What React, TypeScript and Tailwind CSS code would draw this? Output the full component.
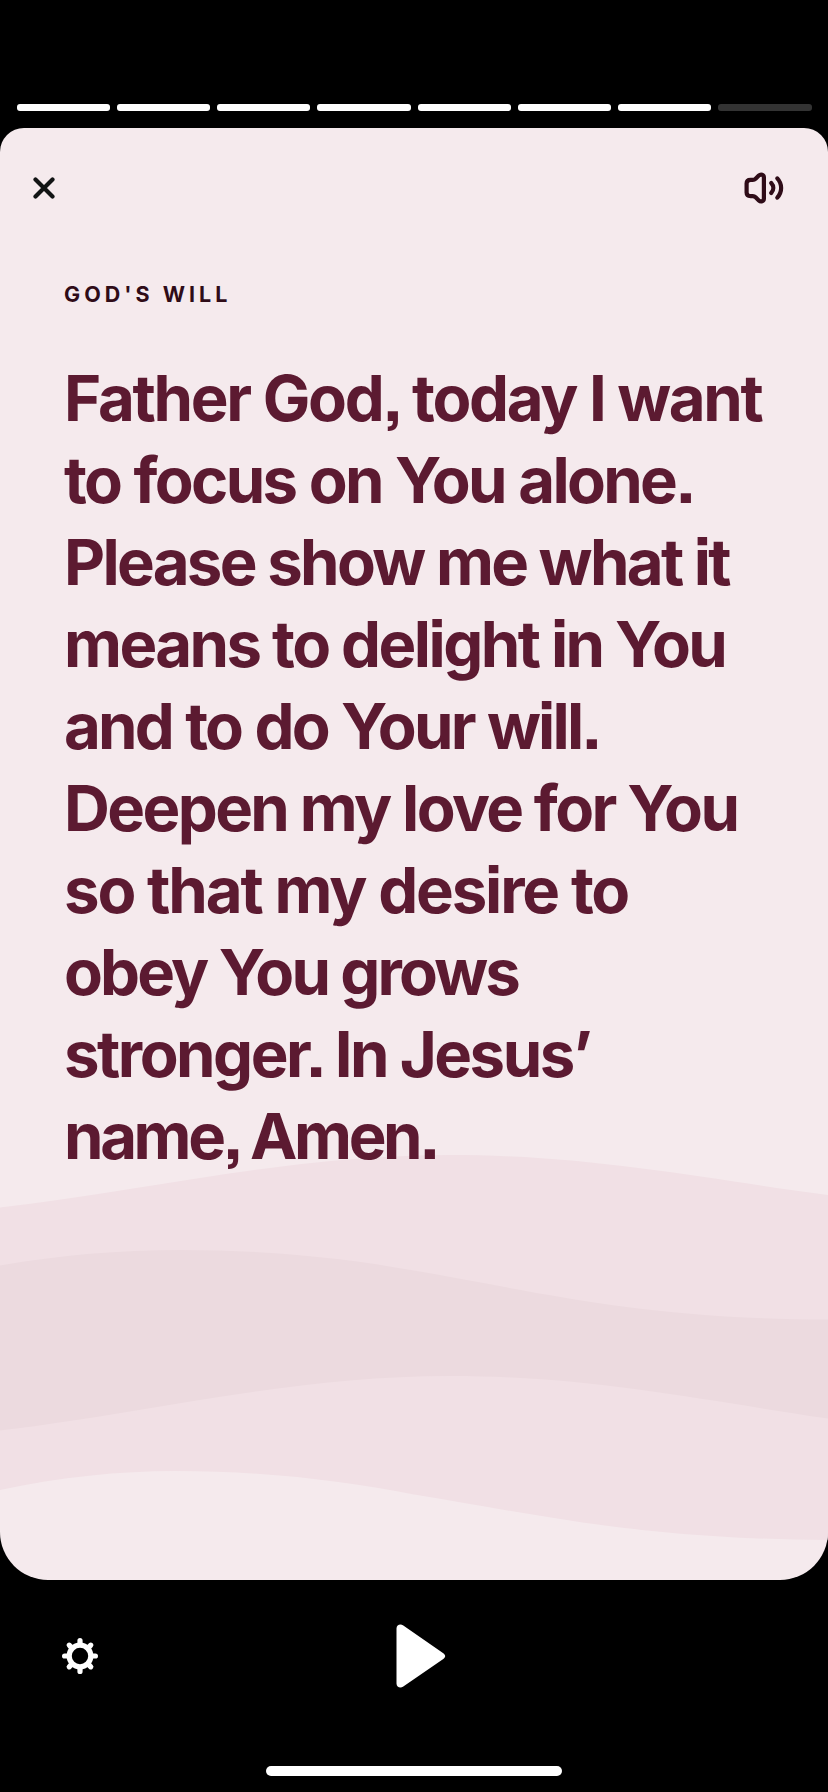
const TOTAL_STEPS = 8;
const CURRENT_STEP = 7;

const prayerLines = [
    { text: "Father God, today I want", tracking: "tracking-[-2.3px]" },
    { text: "to focus on You alone.", tracking: "tracking-[-2.7px] [word-spacing:1px]" },
    { text: "Please show me what it", tracking: "tracking-[-2.7px]" },
    { text: "means to delight in You", tracking: "tracking-[-2.55px]" },
    { text: "and to do Your will.", tracking: "tracking-[-2.8px] [word-spacing:1px]" },
    { text: "Deepen my love for You", tracking: "tracking-[-2.6px]" },
    { text: "so that my desire to", tracking: "tracking-[-2.15px]" },
    { text: "obey You grows", tracking: "tracking-[-2.85px]" },
    { text: "stronger. In Jesus’", tracking: "tracking-[-2.5px]" },
    { text: "name, Amen.", tracking: "tracking-[-3.4px]" },
];

function CloseIcon() {
    return (
        <svg width="22" height="22" viewBox="0 0 22 22" fill="none" stroke="#121414" strokeWidth="4.2" strokeLinecap="round">
            <path d="M2.5 2.5 19.5 19.5M19.5 2.5 2.5 19.5" />
        </svg>
    );
}

function SpeakerIcon() {
    return (
        <svg width="40" height="32" viewBox="0 0 40 32" fill="none" stroke="#2f0c18" strokeWidth="4.2" strokeLinecap="round" strokeLinejoin="round">
            <path d="M2.6 11.5C2.6 9 4.4 7.9 6.6 7.9H8.8C9.9 7.9 10.8 7.5 11.6 6.7L14.8 3.6C16.8 1.7 19.9 2.6 19.9 5.5V26.5C19.9 29.4 16.8 30.3 14.8 28.4L11.6 25.3C10.8 24.5 9.9 24.1 8.8 24.1H6.6C4.4 24.1 2.6 23 2.6 20.5Z" />
            <path d="M27.2 11C30 14 30 18 27.2 21" />
            <path d="M33.3 6.4C38.4 12 38.4 20 33.3 25.6" />
        </svg>
    );
}

function GearIcon() {
    return (
        <svg width="36" height="36" viewBox="0 0 36 36" fill="none" stroke="white">
            <circle cx="18" cy="18" r="10.8" strokeWidth="5.2" />
            <path
                d="M18 5V2.6M18 31v2.4M5 18H2.6M31 18h2.4M8.8 8.8 7.2 7.2M27.2 8.8l1.6-1.6M8.8 27.2l-1.6 1.6M27.2 27.2l1.6 1.6"
                strokeWidth="5.2"
                strokeLinecap="round"
            />
        </svg>
    );
}

function PlayIcon() {
    return (
        <svg width="50" height="64" viewBox="0 0 50 64" fill="white">
            <path d="M.5 4.5C.5 1 4.3-.6 7.3 1.5L47.3 29.2C49.8 31 49.8 33.2 47.3 35L7.3 62.5C4.3 64.6.5 63 .5 59.5Z" />
        </svg>
    );
}

function Waves() {
    return (
        <svg className="absolute inset-x-0 bottom-0" width="828" height="440" viewBox="0 1140 828 440">
            <path
                fill="#f1e0e5"
                d="M0 1207.5C150 1190 290 1155 450 1155C590 1155 700 1178 828 1195V1540C640 1539 540 1515 414 1494.5C345 1481.5 270 1471 175 1471C120 1471 60 1477 0 1490Z"
            />
            <path
                fill="#ecdadf"
                d="M0 1265.5C60 1255 120 1250 180 1250C270 1250 345 1258 414 1270.5C540 1292 640 1319 828 1319.5V1418.5C700 1400 590 1376 450 1376C290 1376 150 1413 0 1430.5Z"
            />
        </svg>
    );
}

function App() {
    return (
        <div className="flex flex-col w-[828px] h-[1792px] bg-black font-['Inter','Liberation_Sans',sans-serif]">
            <div className="flex gap-[7px] px-[16.5px] pt-[104px] pb-[17px]">
                {Array.from({ length: TOTAL_STEPS }, (_, i) => (
                    <div
                        key={i}
                        className={`h-[7px] flex-1 rounded-[3px] ${i < CURRENT_STEP ? "bg-white" : "bg-[#333333]"}`}
                    />
                ))}
            </div>

            <main className="relative h-[1452px] overflow-hidden rounded-t-[24px] rounded-b-[48px] bg-[#f5eaed]">
                <Waves />

                <div className="relative">
                    <div className="flex items-center justify-between pl-[33px] pr-[44px] pt-11">
                        <button type="button" aria-label="Close">
                            <CloseIcon />
                        </button>
                        <button type="button" aria-label="Sound">
                            <SpeakerIcon />
                        </button>
                    </div>

                    <div className="pl-16">
                        <h1 className="mt-[76px] h-7 text-[21.5px] leading-7 font-bold tracking-[4px] text-[#2f0c18]">
                            GOD'S WILL
                        </h1>
                        <p className="mt-[49px] text-[63.5px] leading-[82px] font-bold text-[#5c1a31] [font-feature-settings:'ss07']">
                            {prayerLines.map((line) => (
                                <span key={line.text} className={`block whitespace-nowrap ${line.tracking}`}>
                                    {line.text}
                                </span>
                            ))}
                        </p>
                    </div>
                </div>
            </main>

            <div className="grid grid-cols-3 items-center h-[152px] px-[62px]">
                <button type="button" aria-label="Settings" className="w-fit">
                    <GearIcon />
                </button>
                <button type="button" aria-label="Play" className="justify-self-center ml-[14px]">
                    <PlayIcon />
                </button>
            </div>

            <div className="mx-auto mt-[34px] h-[10px] w-[296px] rounded-full bg-white" />
        </div>
    );
}

export default App;
